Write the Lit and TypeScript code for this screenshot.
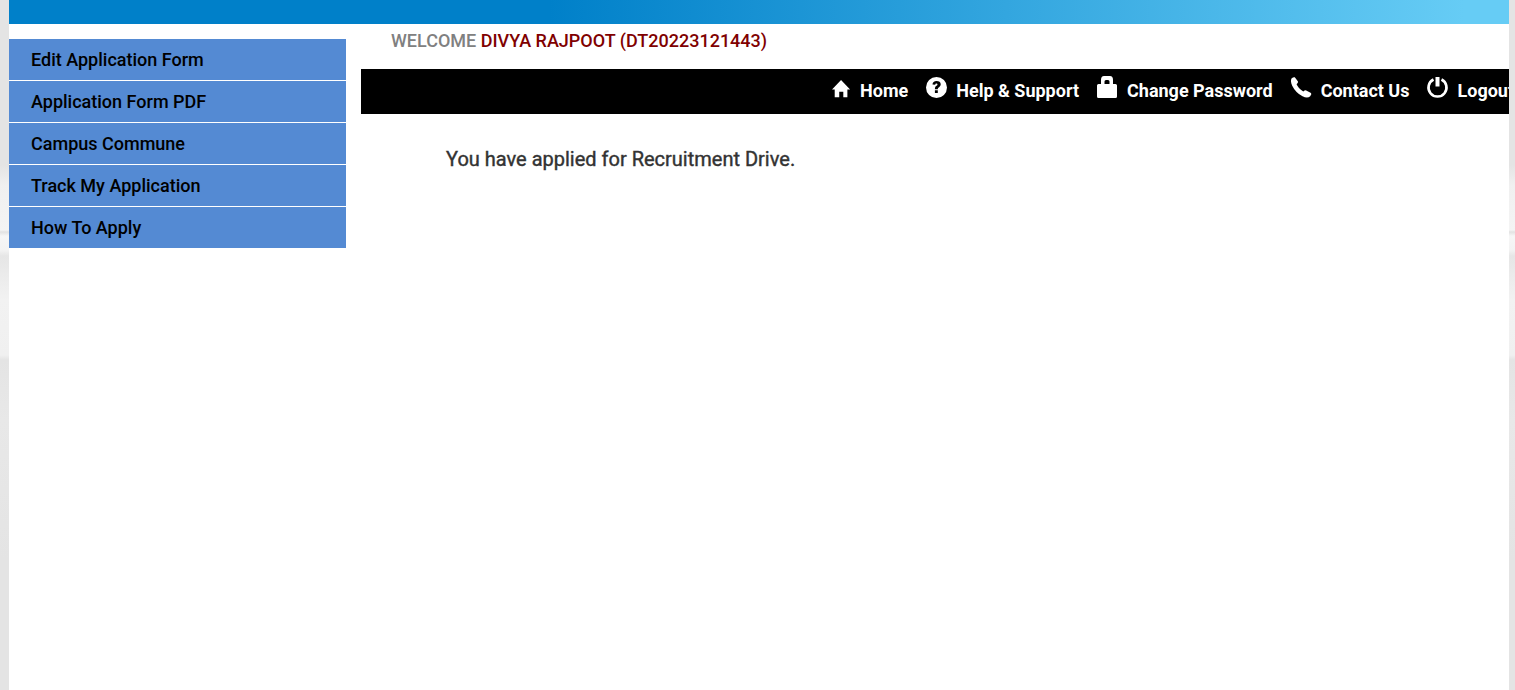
import { LitElement, html, css, svg } from "lit";
import { customElement } from "lit/decorators.js";

const icons = {
  home: svg`<path d="M10 0 L20 10.500 H17 V19 H12.500 V13 H8 V19 H3 V10.500 H0 Z"/>`,
  help: svg`<path fill-rule="evenodd" d="M10.500 0a10.500 10.500 0 1 0 0 21a10.500 10.500 0 0 0 0-21zM6.500 7.600C6.600 5.300 8.100 4.100 10.600 4.100c2.400 0 4.100 1.200 4.100 3.200 0 1.500-.8 2.400-1.900 3.100-.8.5-1 .9-1 1.800H8.900c0-1.800.5-2.700 1.600-3.400.7-.5 1-.8 1-1.400 0-.6-.4-.9-1-.9-.8 0-1.200.4-1.300 1.300zM8.900 13.200h2.900v2.700H8.900z"/>`,
  lock: svg`<path fill-rule="evenodd" d="M4 7V3Q4-1 7-1h6q3 0 3 4V7h2.500q1.500 0 1.500 1.500V19.500q0 1.500-1.500 1.500H1.500Q0 21 0 19.500V8.500Q0 7 1.500 7zM7.500 7h5V4.500q0-1.500-1.500-1.500H9Q7.500 3 7.500 4.500z"/>`,
  phone: svg`<path d="M.5 1.500Q2.500-.2 3.800.3L7 4.500Q7.400 5.600 5.600 7.200Q7 10.800 12.300 14.600Q14 12.900 15.200 13.400L20 16Q21 16.900 19.200 19.200Q16.500 21.800 11.500 19.300Q4.500 15.500 1.200 8.700Q-.9 4 .5 1.500Z"/>`,
  power: svg`<path d="M8.500 0h4v9.500h-4z"/><path d="M6.500 2.500A9 9 0 1 0 14.500 2.500" fill="none" stroke="currentColor" stroke-width="2.600"/>`,
};

const sideLinks = [
  "Edit Application Form",
  "Application Form PDF",
  "Campus Commune",
  "Track My Application",
  "How To Apply",
];

const navLinks = [
  { label: "Home", icon: icons.home, low: true },
  { label: "Help & Support", icon: icons.help },
  { label: "Change Password", icon: icons.lock },
  { label: "Contact Us", icon: icons.phone },
  { label: "Logout", icon: icons.power },
];

@customElement("app-root")
export class AppRoot extends LitElement {
  static styles = css`
    :host {
      display: block;
      min-height: 100vh;
      box-sizing: border-box;
      padding: 0 6px 0 9px;
      background: linear-gradient(#e4e4e4 165px, #f0f0f0 185px, #f4f4f4 230px, #e2e2e2 232px, #f6f6f6 236px,
        #f3f3f3 250px, #e6e6e6 256px, #f2f2f2 300px, #f0f0f0 355px, #e4e4e4 360px, #e8e8e8 420px, #e4e4e4 560px);
      font-family: Roboto, sans-serif;
      font-size: 18px;
      line-height: 24px;
      font-weight: 500;
    }
    .page {
      min-height: 100vh;
      background: #fff;
      overflow: hidden;
    }
    .banner {
      height: 24px;
      background: linear-gradient(90deg, #0080c9 36%, #66ccf5 97%);
    }
    .columns {
      display: flex;
      gap: 15px;
    }
    .side {
      flex: 0 0 337px;
      padding-top: 15px;
    }
    ul {
      display: flex;
      list-style: none;
      margin: 0;
      padding: 0;
    }
    .menu {
      flex-direction: column;
      gap: 1px;
    }
    a {
      text-decoration: none;
    }
    .menu a {
      display: block;
      padding: 9px 22px 8px;
      color: #000;
      background: #548ad3;
    }
    main {
      flex: 1;
      min-width: 0;
    }
    .welcome {
      margin: 0;
      padding: 5px 30px 16px;
      color: #808080;
    }
    .name {
      color: #800000;
    }
    .bar {
      background: #000;
      overflow: hidden;
    }
    .links {
      justify-content: flex-end;
      gap: 18px;
      margin-right: -5px;
    }
    .links a {
      display: flex;
      gap: 9px;
      height: 45px;
      box-sizing: border-box;
      padding-top: 10px;
      color: #fff;
      font-weight: 700;
      white-space: nowrap;
    }
    .icon {
      width: 21px;
      height: 21px;
      margin-top: -2px;
      fill: currentColor;
      overflow: visible;
    }
    .low {
      width: 19px;
      height: 19px;
      margin-top: 1px;
    }
    .message {
      margin: 0;
      padding: 33px 85px;
      font-size: 20px;
      font-weight: 400;
      color: #333;
      -webkit-text-stroke: 0.4px #333;
    }
  `;

  render() {
    return html`
      <div class="page">
        <div class="banner"></div>
        <div class="columns">
          <nav class="side" aria-label="Application">
            <ul class="menu">
              ${sideLinks.map((label) => html`<li><a href="#">${label}</a></li>`)}
            </ul>
          </nav>
          <main>
            <p class="welcome">WELCOME <span class="name">DIVYA RAJPOOT (DT20223121443)</span></p>
            <nav class="bar" aria-label="Account">
              <ul class="links">
                ${navLinks.map(
                  (link) => html`<li><a href="#"><svg class="icon ${link.low ? "low" : ""}" viewBox="0 0 21 21" aria-hidden="true">${link.icon}</svg><span>${link.label}</span></a></li>`
                )}
              </ul>
            </nav>
            <p class="message">You have applied for Recruitment Drive.</p>
          </main>
        </div>
      </div>
    `;
  }
}
